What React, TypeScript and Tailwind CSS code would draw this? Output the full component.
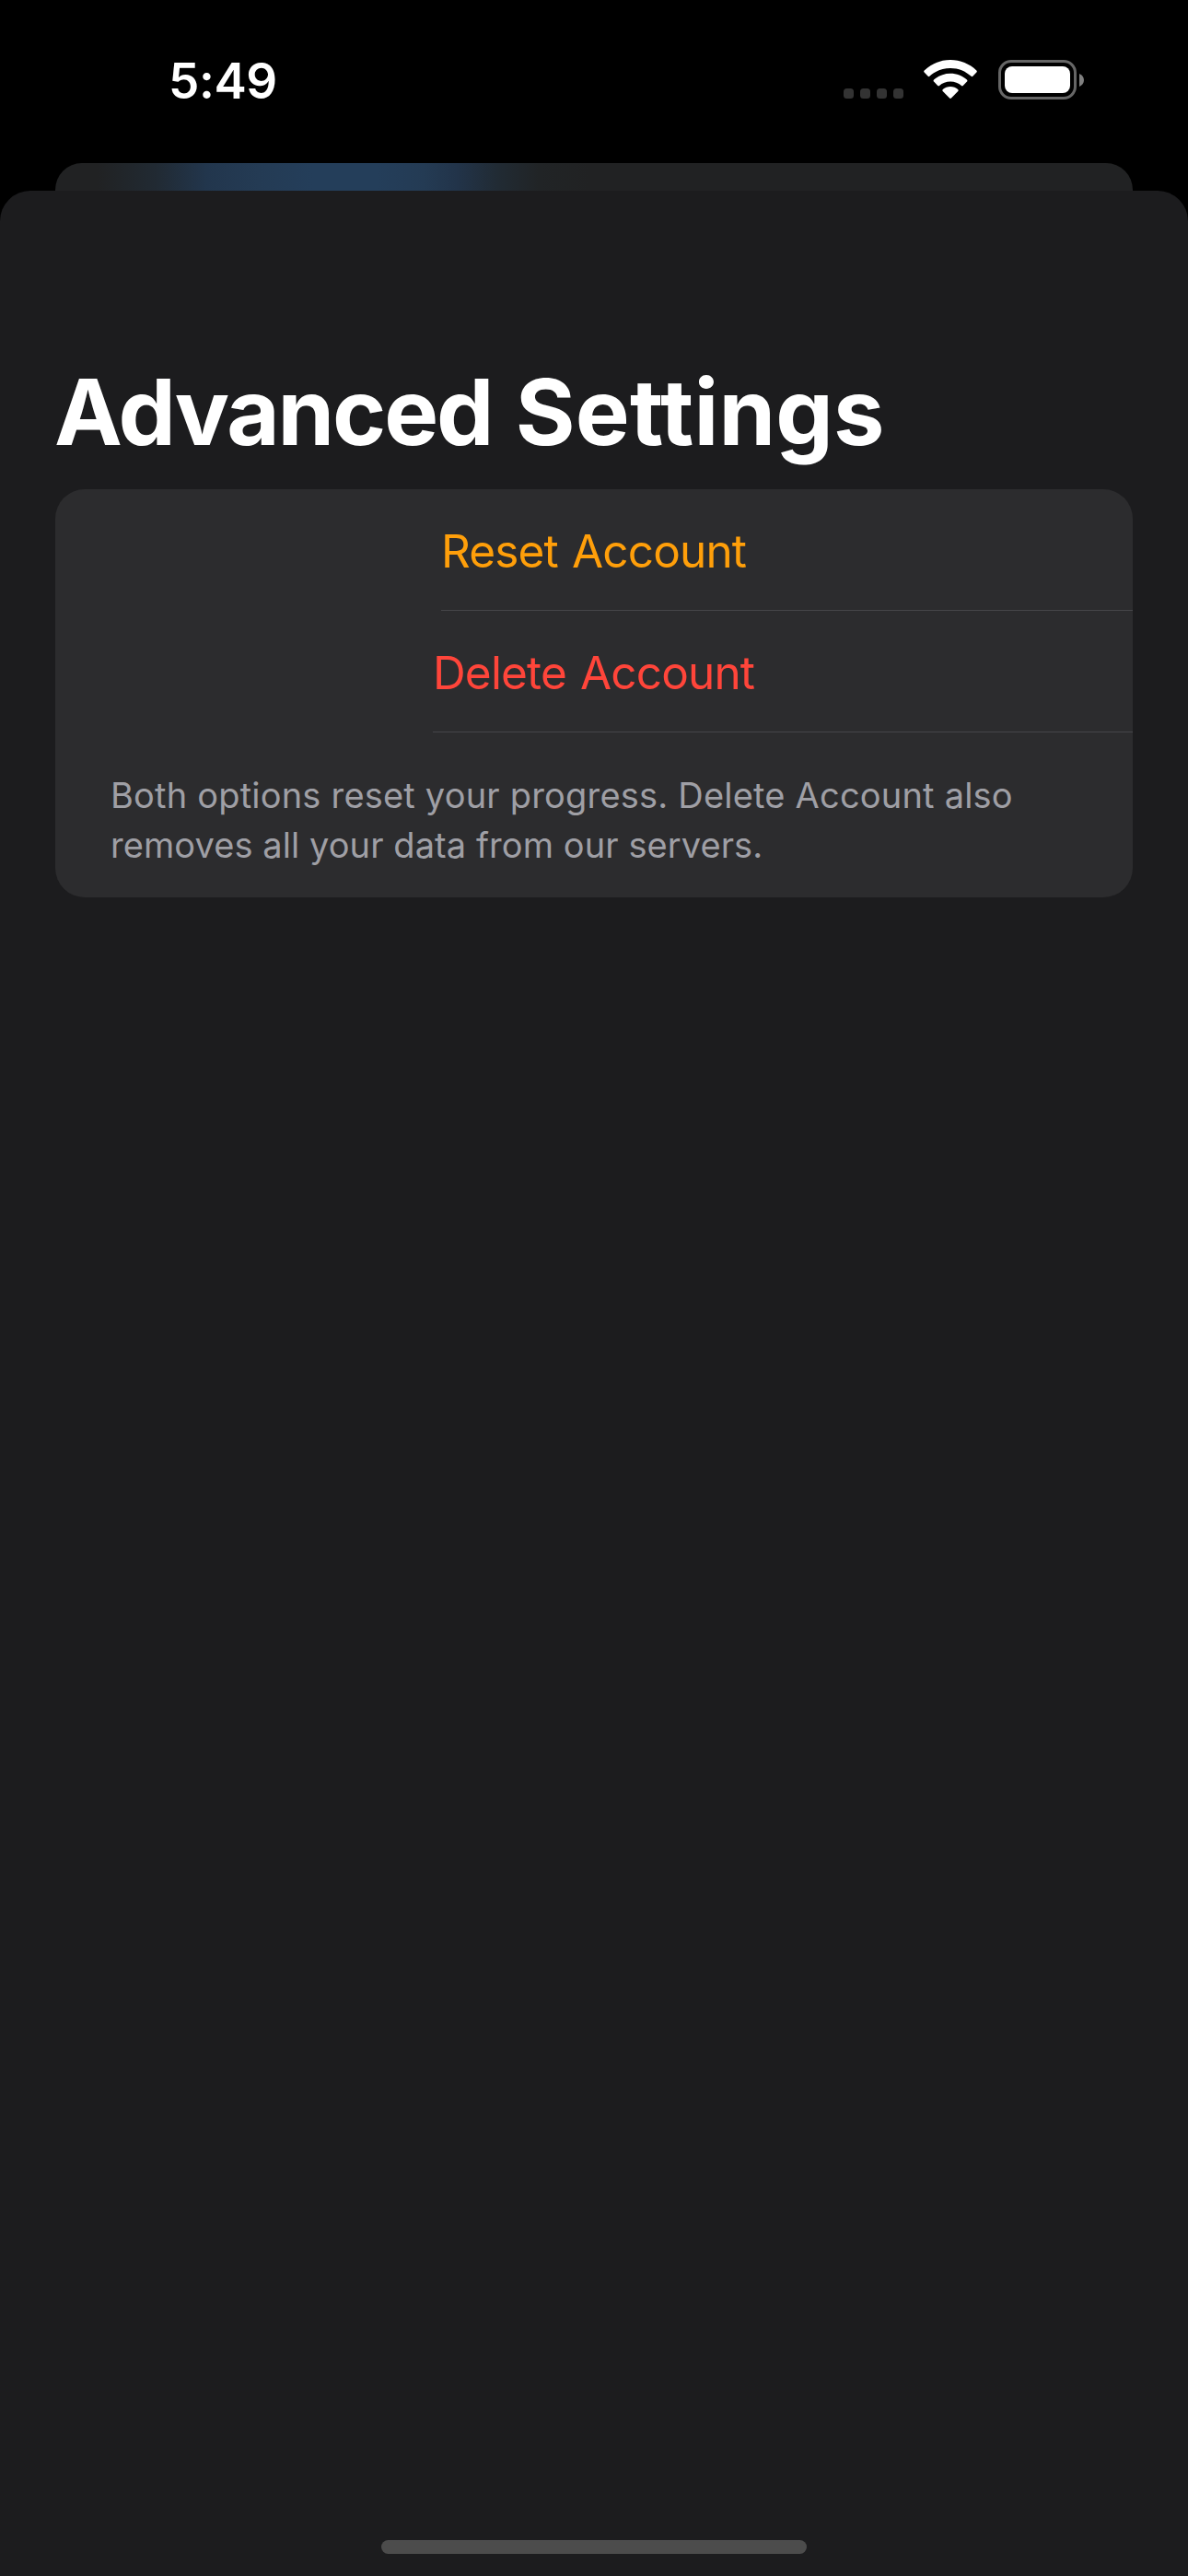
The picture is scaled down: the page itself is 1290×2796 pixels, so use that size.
function CellularDots() {
  return (
    <div className="flex gap-[7px]">
      <span className="size-[11px] rounded-[3.5px] bg-[#333333]" />
      <span className="size-[11px] rounded-[3.5px] bg-[#333333]" />
      <span className="size-[11px] rounded-[3.5px] bg-[#333333]" />
      <span className="size-[11px] rounded-[3.5px] bg-[#333333]" />
    </div>
  );
}

function WifiIcon() {
  return (
    <svg className="h-[43px] w-[58px]" viewBox="0 0 58 43" fill="#fff">
      <path d="M29 0C18.200 0 8.200 4.300 0.700 11.400Q-0.300 12.500 0.600 13.500L4.700 17.800Q5.500 18.600 6.400 17.800C12.400 12.200 20.300 8.900 29 8.900S45.600 12.200 51.600 17.800Q52.500 18.600 53.300 17.800L57.400 13.500Q58.300 12.500 57.300 11.400C49.800 4.300 39.800 0 29 0Z" />
      <path d="M29 14.700C22.200 14.700 15.900 17.300 11.100 21.600Q10.100 22.600 11 23.600L15.300 28Q16.100 28.800 17 28C20.200 25.200 24.400 23.500 29 23.500S37.800 25.200 41 28Q41.900 28.800 42.700 28L47 23.600Q47.900 22.600 46.900 21.600C42.100 17.300 35.800 14.700 29 14.700Z" />
      <path d="M29 29C25.900 29 23 30.100 20.800 32Q19.800 32.900 20.700 33.900L28.100 41.600Q29 42.500 29.900 41.600L37.300 33.900Q38.200 32.900 37.200 32C35 30.100 32.100 29 29 29Z" />
    </svg>
  );
}

function BatteryIcon() {
  return (
    <div className="flex items-center gap-[3px]">
      <div className="h-[43px] w-[85px] rounded-[14px] border-3 border-[#666666] p-[4px]">
        <div className="h-[29px] w-[71px] rounded-[8px] bg-white" />
      </div>
      <svg className="h-[14px] w-[5px]" viewBox="0 0 5 14" fill="#808080">
        <path d="M0 0C3 1.200 5 3.900 5 7S3 12.800 0 14Z" />
      </svg>
    </div>
  );
}

function StatusBar() {
  return (
    <header className="flex h-[177px] shrink-0 justify-between pr-[113px] pl-[183px]">
      <span className="mt-[58px] text-[53px] leading-[60px] font-semibold tracking-[-0.4px] text-white">
        5:49
      </span>
      <div className="mt-[65px] flex h-[43px] items-start">
        <div className="mt-[31px] mr-[22px]">
          <CellularDots />
        </div>
        <div className="mr-[23px]">
          <WifiIcon />
        </div>
        <BatteryIcon />
      </div>
    </header>
  );
}

export default function App() {
  return (
    <div className="flex h-[2796px] w-[1290px] flex-col overflow-hidden bg-black font-['Inter',sans-serif]">
      <StatusBar />

      {/* Edge of the sheet stacked behind the current one */}
      <div className="mx-[60px] h-[30px] shrink-0 rounded-t-[29px] bg-[linear-gradient(90deg,#212223_0px,#212223_45px,#212a33_110px,#22364d_165px,#243b54_220px,#243e5a_280px,#243e5a_350px,#243b54_400px,#22344a_435px,#212b34_480px,#212426_525px,#212223_580px)]" />

      <main className="flex grow flex-col rounded-t-[33px] bg-[#1c1c1e] px-[60px] pt-[180px] pb-[24px]">
        <h1 className="-ml-px text-[99px] leading-[120px] font-bold whitespace-nowrap text-white">
          <span className="tracking-[-2.1px] [word-spacing:4px]">Advanced </span>
          <span className="tracking-[0.2px]">Settings</span>
        </h1>

        <section className="mt-[24px] rounded-[32px] bg-[#2c2c2e]">
          <button className="ml-[419px] block h-[132px] w-[751px] border-b border-[#464649] pt-[2px] text-left text-[49.5px] leading-[130px] tracking-[-0.85px] [word-spacing:2px] text-[#ff9f0a]">
            Reset Account
          </button>
          <button className="ml-[410px] block h-[132px] w-[760px] border-b border-[#464649] pt-[2px] text-left text-[49.5px] leading-[130px] tracking-[-0.85px] [word-spacing:2px] text-[#ff453a]">
            Delete Account
          </button>
          <p className="pt-[41px] pb-[30px] pl-[60px] text-[38px] leading-[54px] whitespace-nowrap text-[#9f9fa5]">
            <span className="block tracking-[0.2px]">Both options reset your progress. Delete Account also</span>
            <span className="block tracking-[0.08px]">removes all your data from our servers.</span>
          </p>
        </section>

        <div className="mx-auto mt-auto h-[15px] w-[462px] rounded-full bg-[#4c4c4c]" />
      </main>
    </div>
  );
}
